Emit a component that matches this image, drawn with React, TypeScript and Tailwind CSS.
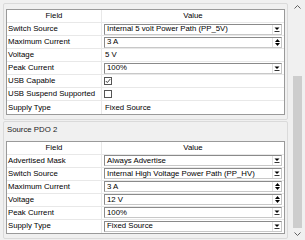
import React from "react";

const Combo = ({ text }: { text: string }) => (
  <div className="mx-[2px] flex h-[11px] items-center border border-[#8a8a8a] border-b-[#c8c8c8] border-r-[#c8c8c8] bg-white">
    <span className="flex-1 truncate pl-[2px] leading-none">{text}</span>
    <div className="flex h-full w-[9px] items-center justify-center border-l border-[#e0e0e0]">
      <svg width="6" height="5" viewBox="0 0 6 5">
        <path d="M0.5 0.5h5L3 3z" fill="#000" />
        <path d="M0.5 4.5h5" stroke="#000" strokeWidth="0.8" />
      </svg>
    </div>
  </div>
);

const Spin = ({ text }: { text: string }) => (
  <div className="mx-[2px] flex h-[11px] items-center border border-[#8a8a8a] border-b-[#c8c8c8] border-r-[#c8c8c8] bg-white">
    <span className="flex-1 truncate pl-[2px] leading-none">{text}</span>
    <div className="flex h-full w-[9px] flex-col items-center justify-center gap-[1px] border-l border-[#e0e0e0]">
      <svg width="5" height="3" viewBox="0 0 5 3">
        <path d="M0 3h5L2.5 0z" fill="#000" />
      </svg>
      <svg width="5" height="3" viewBox="0 0 5 3">
        <path d="M0 0h5L2.5 3z" fill="#000" />
      </svg>
    </div>
  </div>
);

const Check = ({ checked }: { checked: boolean }) => (
  <div className="ml-[2px] flex h-[8px] w-[8px] items-center justify-center border border-[#555] bg-white">
    {checked && (
      <svg width="6" height="6" viewBox="0 0 6 6">
        <path d="M0.8 3l1.5 1.6L5.3 1" stroke="#333" strokeWidth="0.9" fill="none" />
      </svg>
    )}
  </div>
);

type Row = { f: string; v: React.ReactNode };

const Table = ({ rows }: { rows: Row[] }) => (
  <div className="border border-[#9a9a9a] bg-white">
    <div className="grid h-[13px] grid-cols-[95px_1fr] border-b border-[#e8e8e8]">
      <div className="flex items-center justify-center border-r border-[#e8e8e8]">Field</div>
      <div className="flex items-center justify-center">Value</div>
    </div>
    {rows.map((r, i) => (
      <div
        key={i}
        className={
          "grid h-[13px] grid-cols-[95px_1fr] " +
          (i < rows.length - 1 ? "border-b border-[#e8e8e8]" : "")
        }
      >
        <div className="flex items-center whitespace-nowrap border-r border-[#e8e8e8] pl-[1px]">{r.f}</div>
        <div className="flex flex-col justify-center">{r.v}</div>
      </div>
    ))}
  </div>
);

const Plain = ({ text }: { text: string }) => <span className="pl-[3px]">{text}</span>;

export default function App() {
  const rows1: Row[] = [
    { f: "Switch Source", v: <Combo text="Internal 5 volt Power Path (PP_5V)" /> },
    { f: "Maximum Current", v: <Spin text="3 A" /> },
    { f: "Voltage", v: <Plain text="5 V" /> },
    { f: "Peak Current", v: <Combo text="100%" /> },
    { f: "USB Capable", v: <Check checked /> },
    { f: "USB Suspend Supported", v: <Check checked={false} /> },
    { f: "Supply Type", v: <Plain text="Fixed Source" /> },
  ];
  const rows2: Row[] = [
    { f: "Advertised Mask", v: <Combo text="Always Advertise" /> },
    { f: "Switch Source", v: <Combo text="Internal High Voltage Power Path (PP_HV)" /> },
    { f: "Maximum Current", v: <Spin text="3 A" /> },
    { f: "Voltage", v: <Spin text="12 V" /> },
    { f: "Peak Current", v: <Combo text="100%" /> },
    { f: "Supply Type", v: <Combo text="Fixed Source" /> },
  ];
  return (
    <div
      className="flex h-[240px] w-[305px] overflow-hidden bg-[#f0f0f0] text-[7.8px] text-black"
      style={{ fontFamily: '"Liberation Sans", Arial, sans-serif' }}
    >
      <div className="flex w-[290px] flex-col">
        <div className="ml-[3px] mr-[2px] mt-[3px] rounded-[2px] border border-[#dadada] px-[2px] pb-[4px] pt-[5px]">
          <Table rows={rows1} />
        </div>
        <div className="ml-[3px] mr-[2px] mt-[1px] rounded-[2px] border border-[#dadada] px-[2px] pb-[4px] pt-[2px]">
          <div className="mb-[5px] pl-[1px] text-[#222]">Source PDO 2</div>
          <Table rows={rows2} />
        </div>
      </div>
      <div className="flex w-[15px] flex-col items-center bg-[#f0f0f0]">
        <div className="flex h-[14px] w-full items-center justify-center">
          <svg width="7" height="4" viewBox="0 0 7 4">
            <path d="M0.5 3.5L3.5 0.5L6.5 3.5" stroke="#606060" fill="none" />
          </svg>
        </div>
        <div className="mt-[62px] w-[9px] flex-1 bg-[#cdcdcd]" />
        <div className="flex h-[12px] w-full items-center justify-center">
          <svg width="7" height="4" viewBox="0 0 7 4">
            <path d="M0.5 0.5L3.5 3.5L6.5 0.5" stroke="#606060" fill="none" />
          </svg>
        </div>
      </div>
    </div>
  );
}
